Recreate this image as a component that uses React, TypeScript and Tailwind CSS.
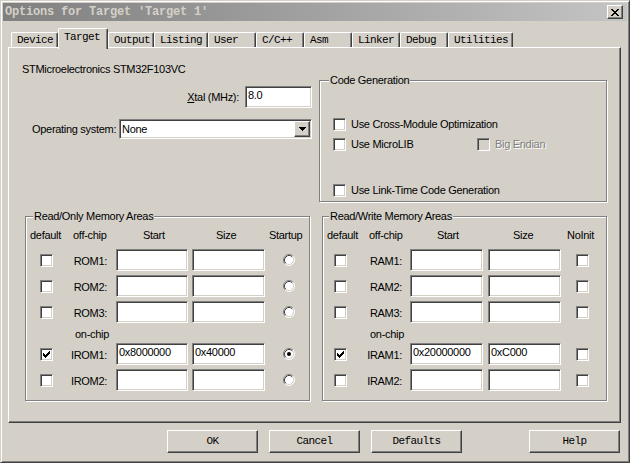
import * as React from "react"
import clsx from "clsx"

const cn = clsx

// classic 3d edges
const SUNKEN =
  "border border-t-[#808080] border-l-[#808080] border-r-white border-b-white shadow-[inset_1px_1px_0_#404040,inset_-1px_-1px_0_#d4d0c8]"
const RAISED =
  "border border-t-white border-l-white border-r-[#404040] border-b-[#404040] shadow-[inset_-1px_-1px_0_#808080]"
const MONO = "font-['Liberation_Mono',monospace]"

function CheckBox({ checked, disabled }: { checked?: boolean; disabled?: boolean }) {
  return (
    <span
      className={cn(
        "flex h-[13px] w-[13px] shrink-0 items-center justify-center",
        SUNKEN,
        disabled ? "bg-[#d4d0c8]" : "bg-white"
      )}
    >
      {checked && (
        <svg width="7" height="7" viewBox="0 0 7 7" shapeRendering="crispEdges">
          <rect x="0" y="2" width="1" height="3" fill="#000" />
          <rect x="1" y="3" width="1" height="3" fill="#000" />
          <rect x="2" y="4" width="1" height="3" fill="#000" />
          <rect x="3" y="3" width="1" height="3" fill="#000" />
          <rect x="4" y="2" width="1" height="3" fill="#000" />
          <rect x="5" y="1" width="1" height="3" fill="#000" />
          <rect x="6" y="0" width="1" height="3" fill="#000" />
        </svg>
      )}
    </span>
  )
}

function Radio({ checked }: { checked?: boolean }) {
  return (
    <svg width="12" height="12" viewBox="0 0 12 12" className="shrink-0">
      <circle cx="6" cy="6" r="5" fill="#fff" />
      <path d="M2.11 9.89 A5.5 5.5 0 0 1 9.89 2.11" fill="none" stroke="#808080" />
      <path d="M9.89 2.11 A5.5 5.5 0 0 1 2.11 9.89" fill="none" stroke="#fff" />
      <path d="M2.82 9.18 A4.5 4.5 0 0 1 9.18 2.82" fill="none" stroke="#404040" />
      <path d="M9.18 2.82 A4.5 4.5 0 0 1 2.82 9.18" fill="none" stroke="#d4d0c8" />
      {checked && <circle cx="6" cy="6" r="2" fill="#000" />}
    </svg>
  )
}

function Field({ value, className }: { value?: string; className?: string }) {
  return (
    <div className={cn("h-[22px] shrink-0 bg-white pl-[2px] pt-[2px] leading-[13px]", SUNKEN, className)}>
      {value}
    </div>
  )
}

function Group({
  label,
  labelOffset,
  className,
  children,
}: {
  label: string
  labelOffset: string
  className?: string
  children: React.ReactNode
}) {
  return (
    <div
      className={cn(
        "flex flex-col border border-[#808080] shadow-[inset_1px_1px_0_#fff,1px_1px_0_#fff]",
        className
      )}
    >
      <span className={cn("-mt-[7px] w-fit bg-[#d4d0c8] px-[1px] leading-[13px] whitespace-nowrap", labelOffset)}>
        {label}
      </span>
      {children}
    </div>
  )
}

type Col = { w: string; head: string; headPad: string; cellPad: string }

type MemRow = { name: string; def?: boolean; start?: string; size?: string; last?: boolean }

function MemoryGroup({
  label,
  labelOffset,
  cols,
  lastHead,
  offRows,
  onRows,
  startW,
  useRadio,
}: {
  label: string
  labelOffset: string
  cols: Col[]
  lastHead: string
  offRows: MemRow[]
  onRows: MemRow[]
  startW: string
  useRadio: boolean
}) {
  const [a, b, c, d, e] = cols

  const row = (r: MemRow, mt: string) => (
    <div key={r.name} className={cn("flex h-[22px] items-center", mt)}>
      <div className={cn("flex", a.w, a.cellPad)}>
        <CheckBox checked={r.def} />
      </div>
      <div className={cn("pt-[2px] text-right", b.w, b.cellPad)}>{r.name}</div>
      <div className={cn("flex", c.w)}>
        <Field value={r.start} className={startW} />
      </div>
      <div className={cn("flex", d.w)}>
        <Field value={r.size} className="w-[73px]" />
      </div>
      <div className={cn("flex", e.cellPad)}>
        {useRadio ? <Radio checked={r.last} /> : <CheckBox />}
      </div>
    </div>
  )

  return (
    <Group label={label} labelOffset={labelOffset} className="h-[185px] w-[285px]">
      <div className="mt-[6px] flex leading-[13px]">
        <div className={cn(a.w, a.headPad)}>{a.head}</div>
        <div className={cn(b.w, b.headPad)}>{b.head}</div>
        <div className={cn(c.w, c.headPad)}>{c.head}</div>
        <div className={cn(d.w, d.headPad)}>{d.head}</div>
        <div className={e.headPad}>{lastHead}</div>
      </div>
      {row(offRows[0], "mt-[7px]")}
      {row(offRows[1], "mt-[4px]")}
      {row(offRows[2], "mt-[4px]")}
      <div className="mt-[5px] flex leading-[13px]">
        <div className={a.w} />
        <div className="pl-[5px]">on-chip</div>
      </div>
      {row(onRows[0], "mt-[2px]")}
      {row(onRows[1], "mt-[4px]")}
    </Group>
  )
}

const ROM_COLS: Col[] = [
  { w: "w-[44px]", head: "default", headPad: "pl-[4px]", cellPad: "pl-[14px]" },
  { w: "w-[46px]", head: "off-chip", headPad: "pl-[3px]", cellPad: "pr-[9px]" },
  { w: "w-[76px]", head: "Start", headPad: "pl-[27px]", cellPad: "" },
  { w: "w-[76px]", head: "Size", headPad: "pl-[24px]", cellPad: "" },
  { w: "", head: "", headPad: "pl-[1px]", cellPad: "pl-[15px]" },
]

const RAM_COLS: Col[] = [
  { w: "w-[42px]", head: "default", headPad: "pl-[4px]", cellPad: "pl-[11px]" },
  { w: "w-[45px]", head: "off-chip", headPad: "pl-[4px]", cellPad: "pr-[8px]" },
  { w: "w-[78px]", head: "Start", headPad: "pl-[27px]", cellPad: "" },
  { w: "w-[77px]", head: "Size", headPad: "pl-[25px]", cellPad: "" },
  { w: "", head: "", headPad: "pl-[2px]", cellPad: "pl-[11px]" },
]

const TABS = [
  { name: "Device", w: "w-[47px]" },
  { name: "Target", w: "w-[50px]", active: true },
  { name: "Output", w: "w-[46px]" },
  { name: "Listing", w: "w-[54px]" },
  { name: "User", w: "w-[48px]" },
  { name: "C/C++", w: "w-[48px]" },
  { name: "Asm", w: "w-[48px]" },
  { name: "Linker", w: "w-[48px]" },
  { name: "Debug", w: "w-[48px]" },
  { name: "Utilities", w: "w-[65px]" },
]

function Button({ label, className }: { label: string; className?: string }) {
  return (
    <div
      className={cn(
        "flex h-[23px] w-[91px] items-center justify-center text-[11px] tracking-[-0.6px]",
        MONO,
        RAISED,
        className
      )}
    >
      {label}
    </div>
  )
}

export default function App() {
  return (
    <div className="flex h-[463px] w-[630px] flex-col border border-t-[#d4d0c8] border-l-[#d4d0c8] border-r-[#404040] border-b-[#404040] bg-[#d4d0c8] p-[2px] font-['Liberation_Sans',Arial,sans-serif] text-[11px] tracking-[-0.3px] text-black shadow-[inset_1px_1px_0_#fff,inset_-1px_-1px_0_#808080]">
      {/* caption */}
      <div className="flex h-[18px] shrink-0 items-center justify-between bg-linear-to-r from-[#808080] to-[#c4c4c4] pl-[2px]">
        <span className={cn("text-[12px] font-bold tracking-[-0.2px] text-[#d4d0c8]", MONO)}>
          Options for Target 'Target 1'
        </span>
        <div className={cn("mr-[4px] flex h-[14px] w-[16px] items-center justify-center bg-[#d4d0c8]", RAISED)}>
          <svg width="8" height="7" viewBox="0 0 8 7" shapeRendering="crispEdges">
            <path d="M0 0h2v1h-2zM6 0h2v1h-2zM1 1h2v1h-2zM5 1h2v1h-2zM2 2h4v1h-4zM3 3h2v1h-2zM2 4h4v1h-4zM1 5h2v1h-2zM5 5h2v1h-2zM0 6h2v1h-2zM6 6h2v1h-2z" fill="#000" />
          </svg>
        </div>
      </div>

      {/* tabs */}
      <div className={cn("mt-[7px] flex h-[19px] shrink-0 items-end pl-[8px] text-[11px] tracking-[-0.6px]", MONO)}>
        {TABS.map((t) =>
          t.active ? (
            <div
              key={t.name}
              className={cn(
                "relative z-10 -mb-[2px] h-[21px] rounded-t-[2px] border-t border-l border-r border-t-white border-l-white border-r-[#404040] bg-[#d4d0c8] pl-[5px] pt-[2px] leading-[13px] shadow-[inset_-1px_0_0_#808080]",
                t.w
              )}
            >
              {t.name}
            </div>
          ) : (
            <div
              key={t.name}
              className={cn(
                "h-[15px] rounded-t-[2px] border-t border-l border-r border-t-white border-l-white border-r-[#404040] pl-[5px] pt-[1px] leading-[13px] shadow-[inset_-1px_0_0_#808080]",
                t.w
              )}
            >
              {t.name}
            </div>
          )
        )}
      </div>

      {/* tab page */}
      <div className="ml-[5px] mr-[6px] flex h-[376px] shrink-0 flex-col border border-t-white border-l-white border-r-[#404040] border-b-[#404040] shadow-[inset_-1px_-1px_0_#808080]">
        <div className="flex h-[168px] shrink-0">
          <div className="flex w-[304px] shrink-0 flex-col pl-[13px]">
            <div className="mt-[14px] leading-[14px]">STMicroelectronics STM32F103VC</div>
            <div className="mt-[10px] flex items-center justify-end pr-[1px]">
              <span className="whitespace-nowrap">
                <span className="underline">X</span>tal (MHz):
              </span>
              <Field value="8.0" className="ml-[6px] h-[21px] w-[67px]" />
            </div>
            <div className="mt-[11px] flex items-center justify-between pl-[10px] pr-[1px]">
              <span className="whitespace-nowrap">Operating system:</span>
              <div className={cn("flex h-[20px] w-[193px] shrink-0 items-center bg-white pl-[2px]", SUNKEN)}>
                <span className="flex-1">None</span>
                <div className={cn("mr-[1px] flex h-[16px] w-[16px] items-center justify-center bg-[#d4d0c8]", RAISED)}>
                  <svg width="7" height="4" viewBox="0 0 7 4" shapeRendering="crispEdges">
                    <path d="M0 0h7v1h-7zM1 1h5v1h-5zM2 2h3v1h-3zM3 3h1v1h-1z" fill="#000" />
                  </svg>
                </div>
              </div>
            </div>
          </div>

          <Group label="Code Generation" labelOffset="ml-[9px]" className="ml-[6px] mt-[32px] h-[122px] w-[288px]">
            <div className="mt-[31px] flex h-[13px] items-center pl-[13px]">
              <CheckBox />
              <span className="ml-[5px]">Use Cross-Module Optimization</span>
            </div>
            <div className="mt-[7px] flex h-[13px] items-center pl-[13px]">
              <div className="flex w-[144px] items-center">
                <CheckBox />
                <span className="ml-[5px]">Use MicroLIB</span>
              </div>
              <CheckBox disabled />
              <span className="ml-[5px] text-[#808080] [text-shadow:1px_1px_0_#fff]">Big Endian</span>
            </div>
            <div className="mt-[33px] flex h-[13px] items-center pl-[13px]">
              <CheckBox />
              <span className="ml-[5px]">Use Link-Time Code Generation</span>
            </div>
          </Group>
        </div>

        <div className="flex gap-[12px] pl-[16px]">
          <MemoryGroup
            label="Read/Only Memory Areas"
            labelOffset="ml-[7px]"
            cols={ROM_COLS}
            lastHead="Startup"
            startW="w-[72px]"
            useRadio
            offRows={[{ name: "ROM1:" }, { name: "ROM2:" }, { name: "ROM3:" }]}
            onRows={[
              { name: "IROM1:", def: true, start: "0x8000000", size: "0x40000", last: true },
              { name: "IROM2:" },
            ]}
          />
          <MemoryGroup
            label="Read/Write Memory Areas"
            labelOffset="ml-[6px]"
            cols={RAM_COLS}
            lastHead="NoInit"
            startW="w-[73px]"
            useRadio={false}
            offRows={[{ name: "RAM1:" }, { name: "RAM2:" }, { name: "RAM3:" }]}
            onRows={[
              { name: "IRAM1:", def: true, start: "0x20000000", size: "0xC000" },
              { name: "IRAM2:" },
            ]}
          />
        </div>
      </div>

      {/* dialog buttons */}
      <div className="mt-[7px] flex pl-[164px]">
        <Button label="OK" />
        <Button label="Cancel" className="ml-[11px]" />
        <Button label="Defaults" className="ml-[11px]" />
        <Button label="Help" className="ml-[67px]" />
      </div>
    </div>
  )
}
